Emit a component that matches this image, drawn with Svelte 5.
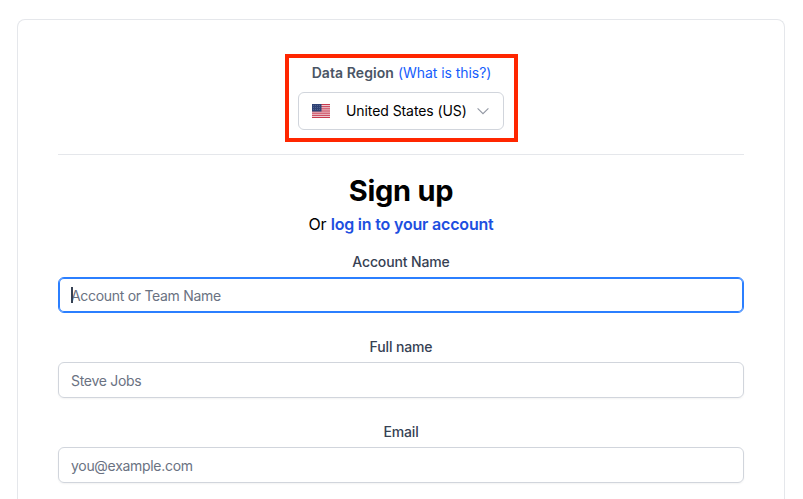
<script lang="ts">
	type Field = {
		id: string;
		label: string;
		placeholder: string;
		type: string;
	};

	const fields: Field[] = [
		{ id: 'account', label: 'Account Name', placeholder: 'Account or Team Name', type: 'text' },
		{ id: 'name', label: 'Full name', placeholder: 'Steve Jobs', type: 'text' },
		{ id: 'email', label: 'Email', placeholder: 'you@example.com', type: 'email' }
	];

	const stripes = [0, 1, 2, 3, 4, 5, 6];

	let active = $state('account');
	let values = $state<Record<string, string>>({ account: '', name: '', email: '' });
</script>

<main class="card">
	<section class="region">
		<div class="region-label">
			<strong>Data Region</strong> <a href="#region">(What is this?)</a>
		</div>
		<button type="button" class="select">
			<svg class="flag" width="18" height="14" viewBox="0 0 18 14">
				<rect width="18" height="14" fill="#f0d5db" />
				{#each stripes as i}
					<rect y={i * 2.154} width="18" height="1.077" fill="#c8394e" />
				{/each}
				<rect width="9.5" height="7.5" fill="#2f4275" />
				<path
					d="M1 1.5h8M1 3.5h8M1 5.5h8"
					stroke="#6d7da3"
					stroke-width=".7"
					stroke-dasharray=".8 1.2"
				/>
			</svg>
			<span>United States (US)</span>
			<svg class="chevron" width="12" height="8" viewBox="0 0 12 8" fill="none">
				<path d="M.6 1.3 6 6.7l5.4-5.4" stroke="#9297a3" stroke-width="1.1" />
			</svg>
		</button>
	</section>

	<header>
		<h1>Sign up</h1>
		<p>Or <a href="#login">log in to your account</a></p>
	</header>

	<form>
		{#each fields as field}
			<div class="field">
				<label for={field.id}>{field.label}</label>
				<div class="control" class:active={active === field.id}>
					<input
						id={field.id}
						type={field.type}
						placeholder={field.placeholder}
						bind:value={values[field.id]}
						onfocus={() => (active = field.id)}
					/>
					{#if active === field.id && !values[field.id]}
						<span class="caret"></span>
					{/if}
				</div>
			</div>
		{/each}
	</form>
</main>

<style>
	:global(body) {
		background: #fff;
		overflow: hidden;
	}

	.card {
		box-sizing: border-box;
		width: 768px;
		height: 480px;
		margin: 19px 0 0 17px;
		padding: 34px 40px 0;
		border: 1px solid #e5e7eb;
		border-bottom: 0;
		border-radius: 8px 8px 0 0;
		font-family: Inter, 'Liberation Sans', sans-serif;
		color: #000;
	}

	a {
		color: #155dfc;
		text-decoration: none;
	}

	.region {
		box-sizing: border-box;
		width: 233px;
		height: 88px;
		margin: 0 auto 0 227px;
		padding: 5px 9px 0;
		border: 4px solid #ff2600;
	}

	.region-label {
		margin-bottom: 9px;
		font-size: 14px;
		line-height: 20px;
		text-align: center;
		white-space: nowrap;

		& strong {
			font-weight: 600;
			letter-spacing: 0.08px;
			color: #4a5565;
		}

		& a {
			letter-spacing: -0.05px;
		}
	}

	.select {
		display: flex;
		align-items: center;
		box-sizing: border-box;
		width: 206px;
		height: 38px;
		padding: 0 14px 0 13px;
		border: 1px solid #d1d5dc;
		border-radius: 6px;
		background: #fff;
		font: 400 14px/20px Inter, 'Liberation Sans', sans-serif;
		letter-spacing: -0.08px;
		color: #000;
		white-space: nowrap;

		& span {
			margin-left: 16px;
		}
	}

	.chevron {
		margin-left: auto;
	}

	header {
		margin-top: 12px;
		padding-top: 18px;
		border-top: 1px solid #e5e7eb;
		text-align: center;

		& h1 {
			margin: 0 0 3px;
			font-size: 29px;
			font-weight: 700;
			line-height: 36px;
			letter-spacing: -0.3px;
		}

		& p {
			margin: 0;
			font-size: 16px;
			line-height: 24px;
			letter-spacing: -0.19px;
		}

		& a {
			font-weight: 600;
			color: #1d4fe0;
		}
	}

	form {
		display: grid;
		gap: 24px;
		margin-top: 16px;
	}

	.field {
		display: grid;
		gap: 5px;

		& label {
			font-size: 14px;
			font-weight: 500;
			line-height: 20px;
			letter-spacing: -0.13px;
			text-align: center;
			color: #364153;
		}
	}

	.control {
		position: relative;
		box-sizing: border-box;
		height: 36px;
		padding: 0 12px;
		border: 1px solid #d1d5dc;
		border-radius: 6px;
		box-shadow: 0 1px 2px rgb(0 0 0 / 5%);

		&.active {
			border-color: #2b7fff;
			box-shadow: inset 0 0 0 1px #2b7fff;
		}

		& input {
			display: block;
			width: 100%;
			height: 34px;
			padding: 0;
			border: 0;
			outline: 0;
			background: none;
			font: 400 14px/20px Inter, 'Liberation Sans', sans-serif;
			letter-spacing: -0.3px;
			color: #364153;
		}

		& input::placeholder {
			color: #6a7282;
			opacity: 1;
		}
	}

	.caret {
		position: absolute;
		top: 9px;
		left: 12px;
		width: 2px;
		height: 16px;
		background: #364153;
	}
</style>
